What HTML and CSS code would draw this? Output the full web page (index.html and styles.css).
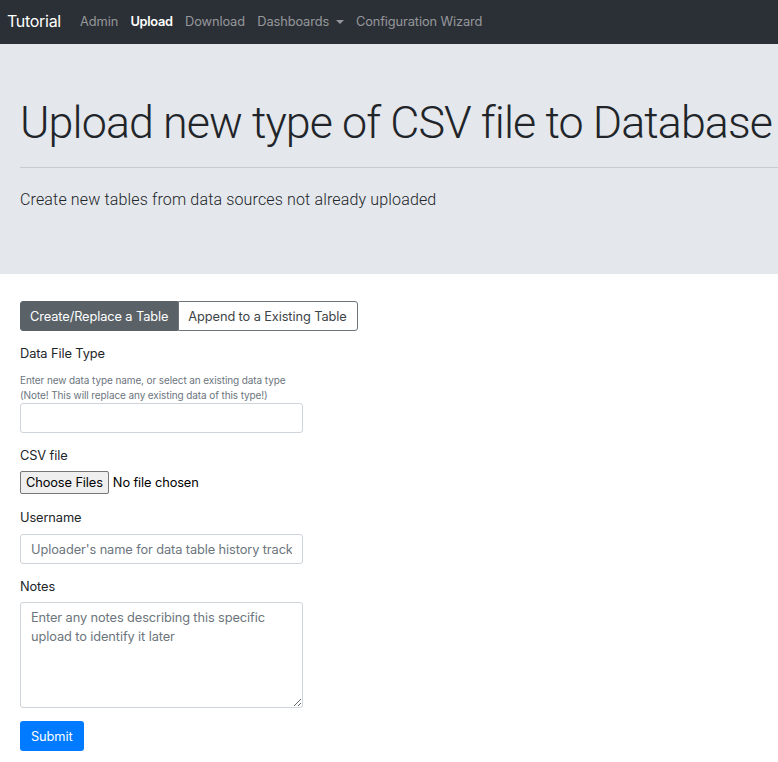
FILE: index.html
```html
<!DOCTYPE html>
<html lang="en">
<head>
<meta charset="utf-8">
<title>Upload</title>
<link rel="stylesheet" href="styles.css">
</head>
<body>
<nav class="navbar">
  <a class="brand" href="#">Tutorial</a>
  <ul class="nav">
    <li><a class="nav-link" href="#">Admin</a></li>
    <li><a class="nav-link active" href="#">Upload</a></li>
    <li><a class="nav-link" href="#">Download</a></li>
    <li><a class="nav-link dropdown" href="#">Dashboards <span class="caret"></span></a></li>
    <li><a class="nav-link" href="#">Configuration Wizard</a></li>
  </ul>
</nav>
<header class="jumbotron">
  <h1 class="display">Upload new type of CSV file to Database</h1>
  <hr class="rule">
  <p class="lead">Create new tables from data sources not already uploaded</p>
</header>
<main class="content">
  <div class="btn-group">
    <button class="btn btn-active" type="button">Create/Replace a Table</button>
    <button class="btn btn-outline" type="button">Append to a Existing Table</button>
  </div>
  <form class="form">
    <div class="group">
      <label class="label">Data File Type</label>
      <small class="help">Enter new data type name, or select an existing data type<br>(Note! This will replace any existing data of this type!)</small>
      <input class="control" type="text">
    </div>
    <div class="group group-file">
      <label class="label">CSV file</label>
      <div class="file"><span class="file-btn">Choose Files</span><span class="file-text">No file chosen</span></div>
    </div>
    <div class="group">
      <label class="label label-user">Username</label>
      <input class="control" type="text" placeholder="Uploader's name for data table history tracking">
    </div>
    <div class="group">
      <label class="label">Notes</label>
      <textarea class="control area" placeholder="Enter any notes describing this specific upload to identify it later"></textarea>
    </div>
    <button class="submit" type="button">Submit</button>
  </form>
</main>
</body>
</html>
```
FILE: styles.css
```css
* { box-sizing: border-box; }
html, body { margin: 0; padding: 0; }
body {
  font-family: Inter, "Liberation Sans", sans-serif;
  font-size: 12.8px;
  letter-spacing: -0.1px;
  color: #212529;
  background: #fff;
  width: 778px;
  overflow: hidden;
}
.navbar {
  height: 44px;
  background: #2b2f36;
  display: flex;
  align-items: center;
  padding: 0 7px 2px 7px;
}
.brand {
  color: #fff;
  text-decoration: none;
  font-size: 16px;
  letter-spacing: -0.3px;
  margin-right: 13px;
}
.nav { list-style: none; margin: 0; padding: 0; display: flex; }
.nav-link {
  display: block;
  color: rgba(255,255,255,0.5);
  text-decoration: none;
  padding: 0 6.2px;
  font-size: 12.8px;
}
.nav-link.active { color: #fff; font-weight: 600; letter-spacing: -0.3px; }
.caret {
  display: inline-block;
  width: 0; height: 0;
  margin-left: 3px;
  vertical-align: 2px;
  border-top: 4px solid rgba(255,255,255,0.5);
  border-left: 4px solid transparent;
  border-right: 4px solid transparent;
}
.jumbotron {
  background: #e4e7eb;
  height: 230px;
  padding: 52px 0 0 20px;
}
.display {
  margin: 0;
  font-family: Roboto, "Liberation Sans", sans-serif;
  letter-spacing: -0.9px;
  font-size: 44.8px;
  font-weight: 300;
  line-height: 1.2;
  white-space: nowrap;
}
.rule {
  margin: 17px 0 0 0;
  border: 0;
  border-top: 1px solid #c8cbcf;
}
.lead {
  margin: 22px 0 0 0;
  font-family: Roboto, "Liberation Sans", sans-serif;
  letter-spacing: 0.15px;
  font-size: 16px;
  font-weight: 300;
}
.content { padding: 27px 20px 0 20px; }
.btn-group { display: flex; }
.btn {
  font: inherit;
  letter-spacing: inherit;
  height: 30px;
  padding: 0 9px;
  border: 1px solid #6c757d;
  cursor: pointer;
}
.btn-active {
  background: #5a6268;
  color: #fff;
  border-color: #5a6268;
  border-radius: 3px 0 0 3px;
}
.btn-outline {
  background: #fff;
  color: #3d4449;
  border-color: #6c757d;
  border-radius: 0 3px 3px 0;
  padding-right: 10px;
}
.form { margin-top: 13px; }
.group { display: flex; flex-direction: column; align-items: flex-start; margin-bottom: 13px; }
.group-file { margin-bottom: 14px; }
.label { margin-bottom: 6px; line-height: 19px; }
.label-user { margin-bottom: 7px; }
.help { font-size: 10px; color: #6c757d; line-height: 15px; margin-top: 4px; }
.control {
  width: 283px;
  height: 30px;
  font: inherit;
  letter-spacing: inherit;
  padding: 0 10px;
  border: 1px solid #ced4da;
  border-radius: 3px;
  color: #495057;
}
.control::placeholder { color: #6c757d; }
.area { height: 106px; padding-top: 5px; resize: vertical; line-height: 19px; }
.file { display: flex; align-items: center; }
.file-btn {
  display: inline-block;
  height: 23px;
  line-height: 21px;
  padding: 0 5px;
  border: 1px solid #767676;
  border-radius: 2px;
  background: #efefef;
  color: #000;
}
.file-text { margin-left: 4px; color: #000; }
.submit {
  font: inherit;
  letter-spacing: inherit;
  color: #fff;
  background: #007bff;
  border: 0;
  border-radius: 3px;
  height: 30px;
  padding: 0 11px;
}
```
